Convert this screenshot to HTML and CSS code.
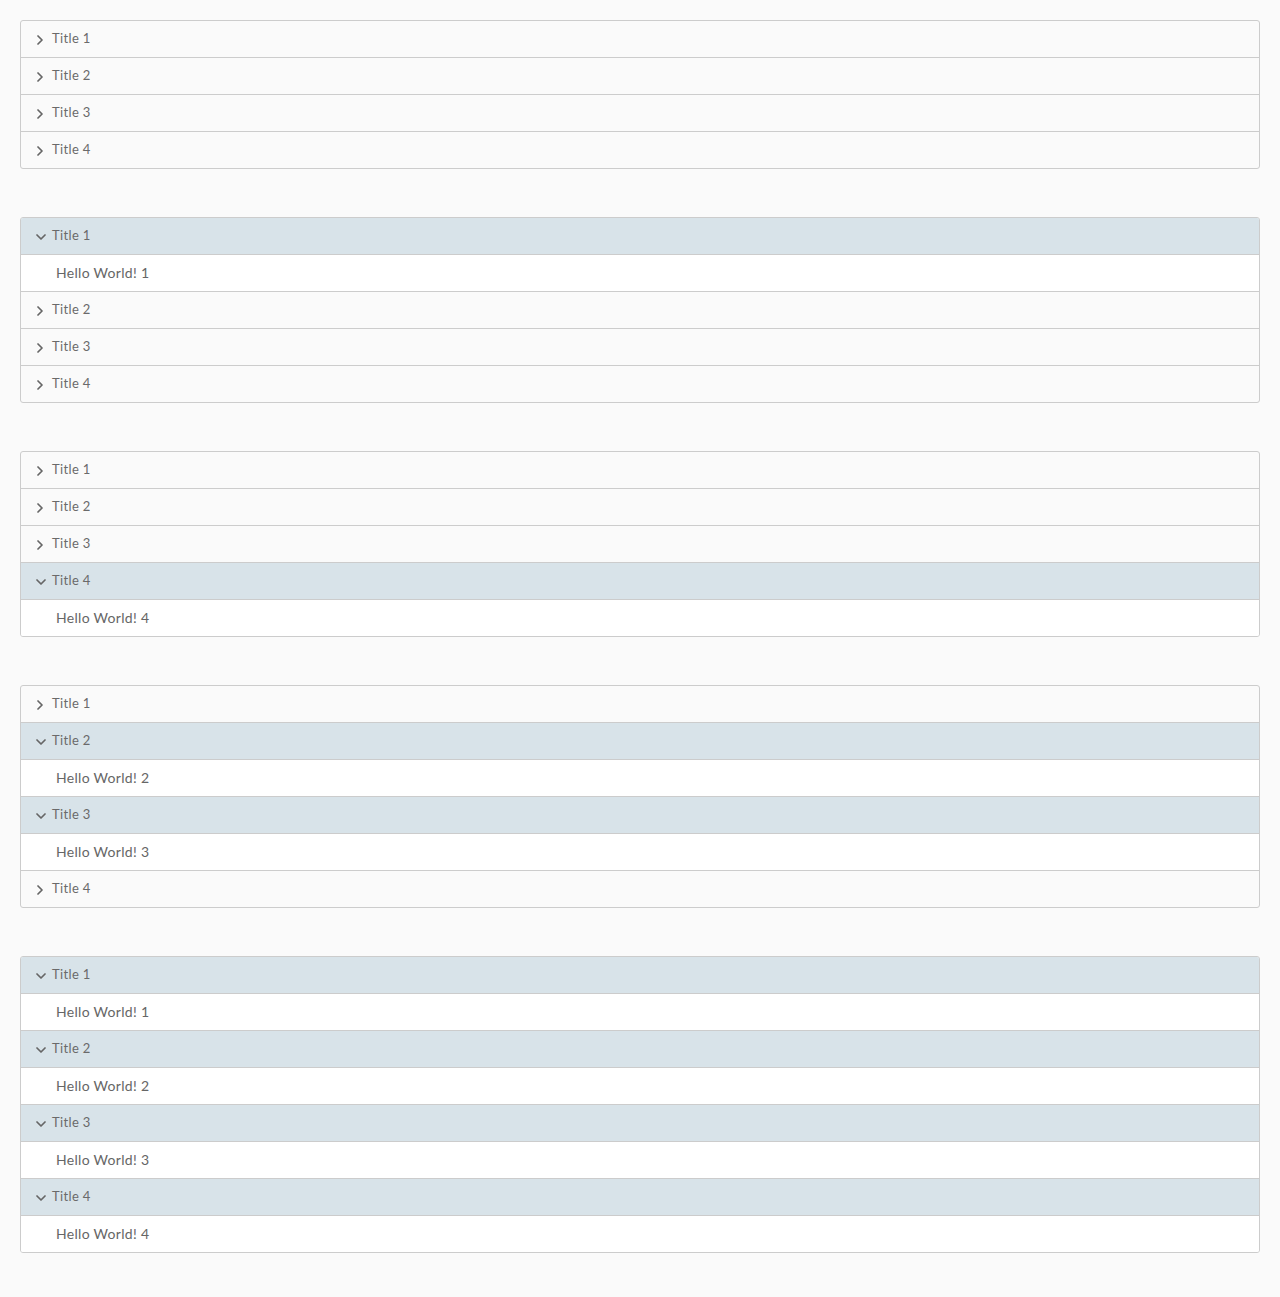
FILE: index.html
```html
<!DOCTYPE html>
<html>
<head>
<meta charset="utf-8">
<link rel="stylesheet" href="styles.css">
</head>
<body>
<div class="page">
  <div class="accordion">
    <div class="panel"><div class="header"><svg class="chev" viewBox="0 0 10 10"><polyline points="2,1 6,5 2,9"/></svg><span class="title">Title 1</span></div></div>
    <div class="panel"><div class="header"><svg class="chev" viewBox="0 0 10 10"><polyline points="2,1 6,5 2,9"/></svg><span class="title">Title 2</span></div></div>
    <div class="panel"><div class="header"><svg class="chev" viewBox="0 0 10 10"><polyline points="2,1 6,5 2,9"/></svg><span class="title">Title 3</span></div></div>
    <div class="panel"><div class="header"><svg class="chev" viewBox="0 0 10 10"><polyline points="2,1 6,5 2,9"/></svg><span class="title">Title 4</span></div></div>
  </div>

  <div class="accordion">
    <div class="panel open"><div class="header"><svg class="chev" viewBox="0 0 10 10"><polyline points="1,3 5,7 9,3"/></svg><span class="title">Title 1</span></div><div class="content">Hello World! 1</div></div>
    <div class="panel"><div class="header"><svg class="chev" viewBox="0 0 10 10"><polyline points="2,1 6,5 2,9"/></svg><span class="title">Title 2</span></div></div>
    <div class="panel"><div class="header"><svg class="chev" viewBox="0 0 10 10"><polyline points="2,1 6,5 2,9"/></svg><span class="title">Title 3</span></div></div>
    <div class="panel"><div class="header"><svg class="chev" viewBox="0 0 10 10"><polyline points="2,1 6,5 2,9"/></svg><span class="title">Title 4</span></div></div>
  </div>

  <div class="accordion">
    <div class="panel"><div class="header"><svg class="chev" viewBox="0 0 10 10"><polyline points="2,1 6,5 2,9"/></svg><span class="title">Title 1</span></div></div>
    <div class="panel"><div class="header"><svg class="chev" viewBox="0 0 10 10"><polyline points="2,1 6,5 2,9"/></svg><span class="title">Title 2</span></div></div>
    <div class="panel"><div class="header"><svg class="chev" viewBox="0 0 10 10"><polyline points="2,1 6,5 2,9"/></svg><span class="title">Title 3</span></div></div>
    <div class="panel open"><div class="header"><svg class="chev" viewBox="0 0 10 10"><polyline points="1,3 5,7 9,3"/></svg><span class="title">Title 4</span></div><div class="content">Hello World! 4</div></div>
  </div>

  <div class="accordion">
    <div class="panel"><div class="header"><svg class="chev" viewBox="0 0 10 10"><polyline points="2,1 6,5 2,9"/></svg><span class="title">Title 1</span></div></div>
    <div class="panel open"><div class="header"><svg class="chev" viewBox="0 0 10 10"><polyline points="1,3 5,7 9,3"/></svg><span class="title">Title 2</span></div><div class="content">Hello World! 2</div></div>
    <div class="panel open"><div class="header"><svg class="chev" viewBox="0 0 10 10"><polyline points="1,3 5,7 9,3"/></svg><span class="title">Title 3</span></div><div class="content">Hello World! 3</div></div>
    <div class="panel"><div class="header"><svg class="chev" viewBox="0 0 10 10"><polyline points="2,1 6,5 2,9"/></svg><span class="title">Title 4</span></div></div>
  </div>

  <div class="accordion">
    <div class="panel open"><div class="header"><svg class="chev" viewBox="0 0 10 10"><polyline points="1,3 5,7 9,3"/></svg><span class="title">Title 1</span></div><div class="content">Hello World! 1</div></div>
    <div class="panel open"><div class="header"><svg class="chev" viewBox="0 0 10 10"><polyline points="1,3 5,7 9,3"/></svg><span class="title">Title 2</span></div><div class="content">Hello World! 2</div></div>
    <div class="panel open"><div class="header"><svg class="chev" viewBox="0 0 10 10"><polyline points="1,3 5,7 9,3"/></svg><span class="title">Title 3</span></div><div class="content">Hello World! 3</div></div>
    <div class="panel open"><div class="header"><svg class="chev" viewBox="0 0 10 10"><polyline points="1,3 5,7 9,3"/></svg><span class="title">Title 4</span></div><div class="content">Hello World! 4</div></div>
  </div>
</div>
</body>
</html>
```

FILE: styles.css
```css
html, body {
  margin: 0;
  padding: 0;
  background: #fafafa;
}
body {
  font-family: "Lato", "Open Sans", sans-serif;
  color: #666666;
}
.page {
  padding: 20px 20px 0 20px;
}
.accordion {
  border: 1px solid #cccccc;
  border-radius: 3px;
  overflow: hidden;
  margin-bottom: 48px;
  background: #fafafa;
}
.panel + .panel {
  border-top: 1px solid #cccccc;
}
.header {
  height: 36px;
  display: flex;
  align-items: center;
  padding-left: 15px;
  padding-bottom: 2px;
  box-sizing: border-box;
  font-size: 13px;
  color: #6a6a6a;
  letter-spacing: 0.35px;
}
.panel.open .header {
  background: #d8e3e9;
  border-bottom: 1px solid #cccccc;
  height: 37px;
}
.content {
  height: 36px;
  box-sizing: border-box;
  display: flex;
  align-items: center;
  padding-left: 35px;
  padding-bottom: 2px;
  background: #ffffff;
  font-size: 14px;
  color: #666666;
  letter-spacing: 0.3px;
}
.chev {
  width: 10px;
  height: 10px;
  flex: none;
  margin-top: 3px;
  margin-right: 6px;
}
.chev polyline {
  fill: none;
  stroke: #666666;
  stroke-width: 1.7;
  stroke-linecap: round;
  stroke-linejoin: round;
}
```
